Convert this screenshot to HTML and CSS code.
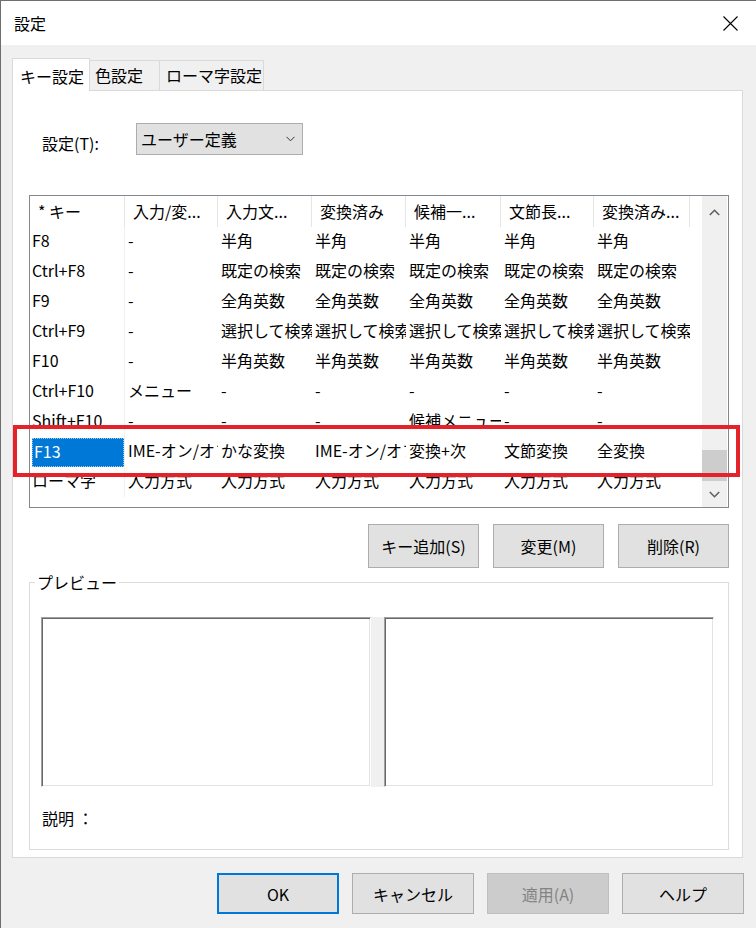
FILE: index.html
```html
<!DOCTYPE html>
<html>
<head>
    <meta charset="utf-8">
    <title>設定</title>
    <link rel="stylesheet" href="styles.css">
</head>
<body>
    <div id="dialog">
        <div class="titlebar">
            <span class="title">設定</span>
            <svg class="close" width="15" height="15" viewBox="0 0 15 15"><path d="M0.5 0.5L14.5 14.5M14.5 0.5L0.5 14.5" stroke="#000" stroke-width="1.1" fill="none"/></svg>
        </div>
        <div class="tabs">
            <div class="tab active">キー設定</div>
            <div class="tab t2">色設定</div>
            <div class="tab t3">ローマ字設定</div>
        </div>
        <div class="panel">
            <div class="preset">
                <label>設定(T):</label>
                <div class="combo">
                    <span>ユーザー定義</span>
                    <svg class="chev" width="9" height="6" viewBox="0 0 9 6"><path d="M0.5 0.8L4.5 4.8L8.5 0.8" stroke="#333" stroke-width="1" fill="none"/></svg>
                </div>
            </div>
            <div class="listview">
                <div class="lv-body">
                    <div class="lv-head">
                        <div class="h">* キー</div>
                        <div class="h">入力/変...</div>
                        <div class="h">入力文...</div>
                        <div class="h">変換済み</div>
                        <div class="h">候補一...</div>
                        <div class="h">文節長...</div>
                        <div class="h">変換済み...</div>
                    </div>
                    <div class="lv-row">
                        <div class="c key">F8</div><div class="c">-</div><div class="c">半角</div><div class="c">半角</div><div class="c">半角</div><div class="c">半角</div><div class="c">半角</div>
                    </div>
                    <div class="lv-row">
                        <div class="c key">Ctrl+F8</div><div class="c">-</div><div class="c">既定の検索</div><div class="c">既定の検索</div><div class="c">既定の検索</div><div class="c">既定の検索</div><div class="c">既定の検索</div>
                    </div>
                    <div class="lv-row">
                        <div class="c key">F9</div><div class="c">-</div><div class="c">全角英数</div><div class="c">全角英数</div><div class="c">全角英数</div><div class="c">全角英数</div><div class="c">全角英数</div>
                    </div>
                    <div class="lv-row">
                        <div class="c key">Ctrl+F9</div><div class="c">-</div><div class="c">選択して検索</div><div class="c">選択して検索</div><div class="c">選択して検索</div><div class="c">選択して検索</div><div class="c">選択して検索</div>
                    </div>
                    <div class="lv-row">
                        <div class="c key">F10</div><div class="c">-</div><div class="c">半角英数</div><div class="c">半角英数</div><div class="c">半角英数</div><div class="c">半角英数</div><div class="c">半角英数</div>
                    </div>
                    <div class="lv-row">
                        <div class="c key">Ctrl+F10</div><div class="c">メニュー</div><div class="c">-</div><div class="c">-</div><div class="c">-</div><div class="c">-</div><div class="c">-</div>
                    </div>
                    <div class="lv-row">
                        <div class="c key">Shift+F10</div><div class="c">-</div><div class="c">-</div><div class="c">-</div><div class="c">候補メニュー</div><div class="c">-</div><div class="c">-</div>
                    </div>
                    <div class="lv-row">
                        <div class="c key"><span class="selected">F13</span></div><div class="c">IME-オン/オフ</div><div class="c">かな変換</div><div class="c">IME-オン/オフ</div><div class="c">変換+次</div><div class="c">文節変換</div><div class="c">全変換</div>
                    </div>
                    <div class="lv-row">
                        <div class="c key">ローマ字</div><div class="c">入力方式</div><div class="c">入力方式</div><div class="c">入力方式</div><div class="c">入力方式</div><div class="c">入力方式</div><div class="c">入力方式</div>
                    </div>
                </div>
                <div class="vscroll">
                    <div class="arrow up"><svg width="11" height="7" viewBox="0 0 11 7"><path d="M0.8 6L5.5 1.3L10.2 6" stroke="#606060" stroke-width="1.6" fill="none"/></svg></div>
                    <div class="track"><div class="thumb"></div></div>
                    <div class="arrow down"><svg width="11" height="7" viewBox="0 0 11 7"><path d="M0.8 1L5.5 5.7L10.2 1" stroke="#606060" stroke-width="1.6" fill="none"/></svg></div>
                </div>
            </div>
            <div class="actions">
                <button class="btn">キー追加(S)</button>
                <button class="btn">変更(M)</button>
                <button class="btn">削除(R)</button>
            </div>
            <fieldset class="preview">
                <legend>プレビュー</legend>
                <div class="boxes">
                    <div class="pbox"></div>
                    <div class="pgap"></div>
                    <div class="pbox"></div>
                </div>
                <div class="desc">説明 ：</div>
            </fieldset>
        </div>
        <div class="footer">
            <button class="btn fbtn ok">OK</button>
            <button class="btn fbtn">キャンセル</button>
            <button class="btn fbtn disabled">適用(A)</button>
            <button class="btn fbtn">ヘルプ</button>
        </div>
        <div class="mark"></div>
    </div>
</body>
</html>
```

FILE: styles.css
```css
html {
    font-family: "Noto Sans CJK JP", "Noto Sans", sans-serif;
    font-size: 16px;
    color: #000;
}
body {
    margin: 0;
}
#dialog {
    position: relative;
    width: 756px;
    height: 928px;
    box-sizing: border-box;
    border-top: 1px solid #6e6e6e;
    border-left: 1px solid #6e6e6e;
    background-color: #f0f0f0;
    overflow: hidden;
}
.titlebar {
    height: 44px;
    display: flex;
    align-items: center;
    padding: 0 18px 0 13px;
    background-color: #fff;
}
.title {
    line-height: 20px;
}
.close {
    margin-left: auto;
}

/* tabs */
.tabs {
    display: flex;
    align-items: flex-end;
    height: 32px;
    margin: 13px 0 0 11px;
}
.tab {
    height: 30px;
    box-sizing: border-box;
    border-top: 1px solid #d9d9d9;
    border-right: 1px solid #d9d9d9;
    line-height: 29px;
    background-color: #f0f0f0;
}
.tab.active {
    position: relative;
    z-index: 1;
    width: 78px;
    height: 33px;
    margin-bottom: -1px;
    padding: 2px 0 0 7px;
    border-left: 1px solid #d9d9d9;
    line-height: 30px;
    background-color: #fff;
}
.t2 {
    width: 70px;
    padding-left: 5px;
}
.t3 {
    width: 104px;
    padding-left: 6px;
}
.panel {
    width: 731px;
    height: 768px;
    margin-left: 11px;
    box-sizing: border-box;
    padding: 32px 0 0 16px;
    border: 1px solid #d9d9d9;
    background-color: #fff;
}

/* preset */
.preset {
    display: flex;
    align-items: center;
    height: 32px;
    padding-left: 13px;
}
.preset label {
    width: 94px;
    padding-top: 8px;
    line-height: 20px;
}
.combo {
    width: 167px;
    height: 32px;
    box-sizing: border-box;
    display: flex;
    align-items: center;
    padding: 0 7px 0 4px;
    border: 1px solid #adadad;
    background-color: #e1e1e1;
}
.chev {
    margin-left: auto;
}

/* list view */
.listview {
    display: flex;
    width: 700px;
    height: 313px;
    margin-top: 40px;
    box-sizing: border-box;
    border: 1px solid #828790;
}
.lv-body {
    width: 672px;
    overflow: hidden;
}
.lv-head, .lv-row {
    display: grid;
    grid-template-columns: 95px 93px 94px 94px 95px 93px 96px;
}
.lv-head {
    height: 31px;
}
.h {
    box-sizing: border-box;
    padding: 1px 0 0 8px;
    border-right: 1px solid #e5e5e5;
    line-height: 29px;
    white-space: nowrap;
    overflow: hidden;
}
.lv-row {
    height: 30px;
}
.c {
    padding-left: 3px;
    line-height: 27px;
    white-space: nowrap;
    overflow: hidden;
}
.c.key {
    box-sizing: border-box;
    padding-left: 2px;
    border-right: 1px solid #f0f0f0;
}
.selected {
    display: block;
    height: 29px;
    margin-top: 1px;
    box-sizing: border-box;
    padding-left: 1px;
    border: 1px dotted #9ec6ea;
    line-height: 24px;
    background-color: #0078d7;
    color: #fff;
}
.vscroll {
    width: 25px;
    display: flex;
    flex-direction: column;
    background-color: #f0f0f0;
}
.arrow {
    display: flex;
    align-items: center;
    justify-content: center;
}
.arrow.up {
    height: 32px;
}
.arrow.down {
    height: 26px;
}
.track {
    flex: 1;
    display: flex;
    flex-direction: column;
    justify-content: flex-end;
}
.thumb {
    height: 31px;
    background-color: #cdcdcd;
}

/* buttons */
.btn {
    box-sizing: border-box;
    border: 1px solid #adadad;
    background-color: #e1e1e1;
    font-family: inherit;
    font-size: 16px;
    color: #000;
    padding: 0;
}
.actions {
    display: flex;
    justify-content: flex-end;
    gap: 14px;
    width: 700px;
    margin-top: 16px;
}
.actions .btn {
    width: 111px;
    height: 44px;
}

/* preview group */
.preview {
    width: 700px;
    height: 278px;
    margin: 4px 0 0 0;
    box-sizing: border-box;
    padding: 0;
    border: 1px solid #dcdcdc;
}
.preview legend {
    margin-left: 5px;
    padding: 0 2px;
    line-height: 20px;
}
.boxes {
    display: flex;
    margin: 25px 0 0 11px;
}
.pbox {
    width: 330px;
    height: 170px;
    box-sizing: border-box;
    border: 1px solid;
    border-color: #a0a0a0 #fff #fff #a0a0a0;
    box-shadow: inset 1px 1px #696969, inset -1px -1px #e3e3e3;
    background-color: #fff;
}
.pgap {
    width: 13px;
    background-color: #f0f0f0;
}
.desc {
    margin: 21px 0 0 12px;
    line-height: 20px;
}

/* footer */
.footer {
    display: flex;
    justify-content: flex-end;
    gap: 13px;
    margin-top: 15px;
    padding-right: 12px;
}
.fbtn {
    width: 122px;
    height: 41px;
}
.fbtn.ok {
    border: 2px solid #0078d7;
}
.fbtn.disabled {
    border-color: #bfbfbf;
    background-color: #cccccc;
    color: #838383;
}

/* annotation */
.mark {
    position: absolute;
    left: 12px;
    top: 424px;
    width: 727px;
    height: 52px;
    box-sizing: border-box;
    border: 4px solid #e3222a;
}
```
